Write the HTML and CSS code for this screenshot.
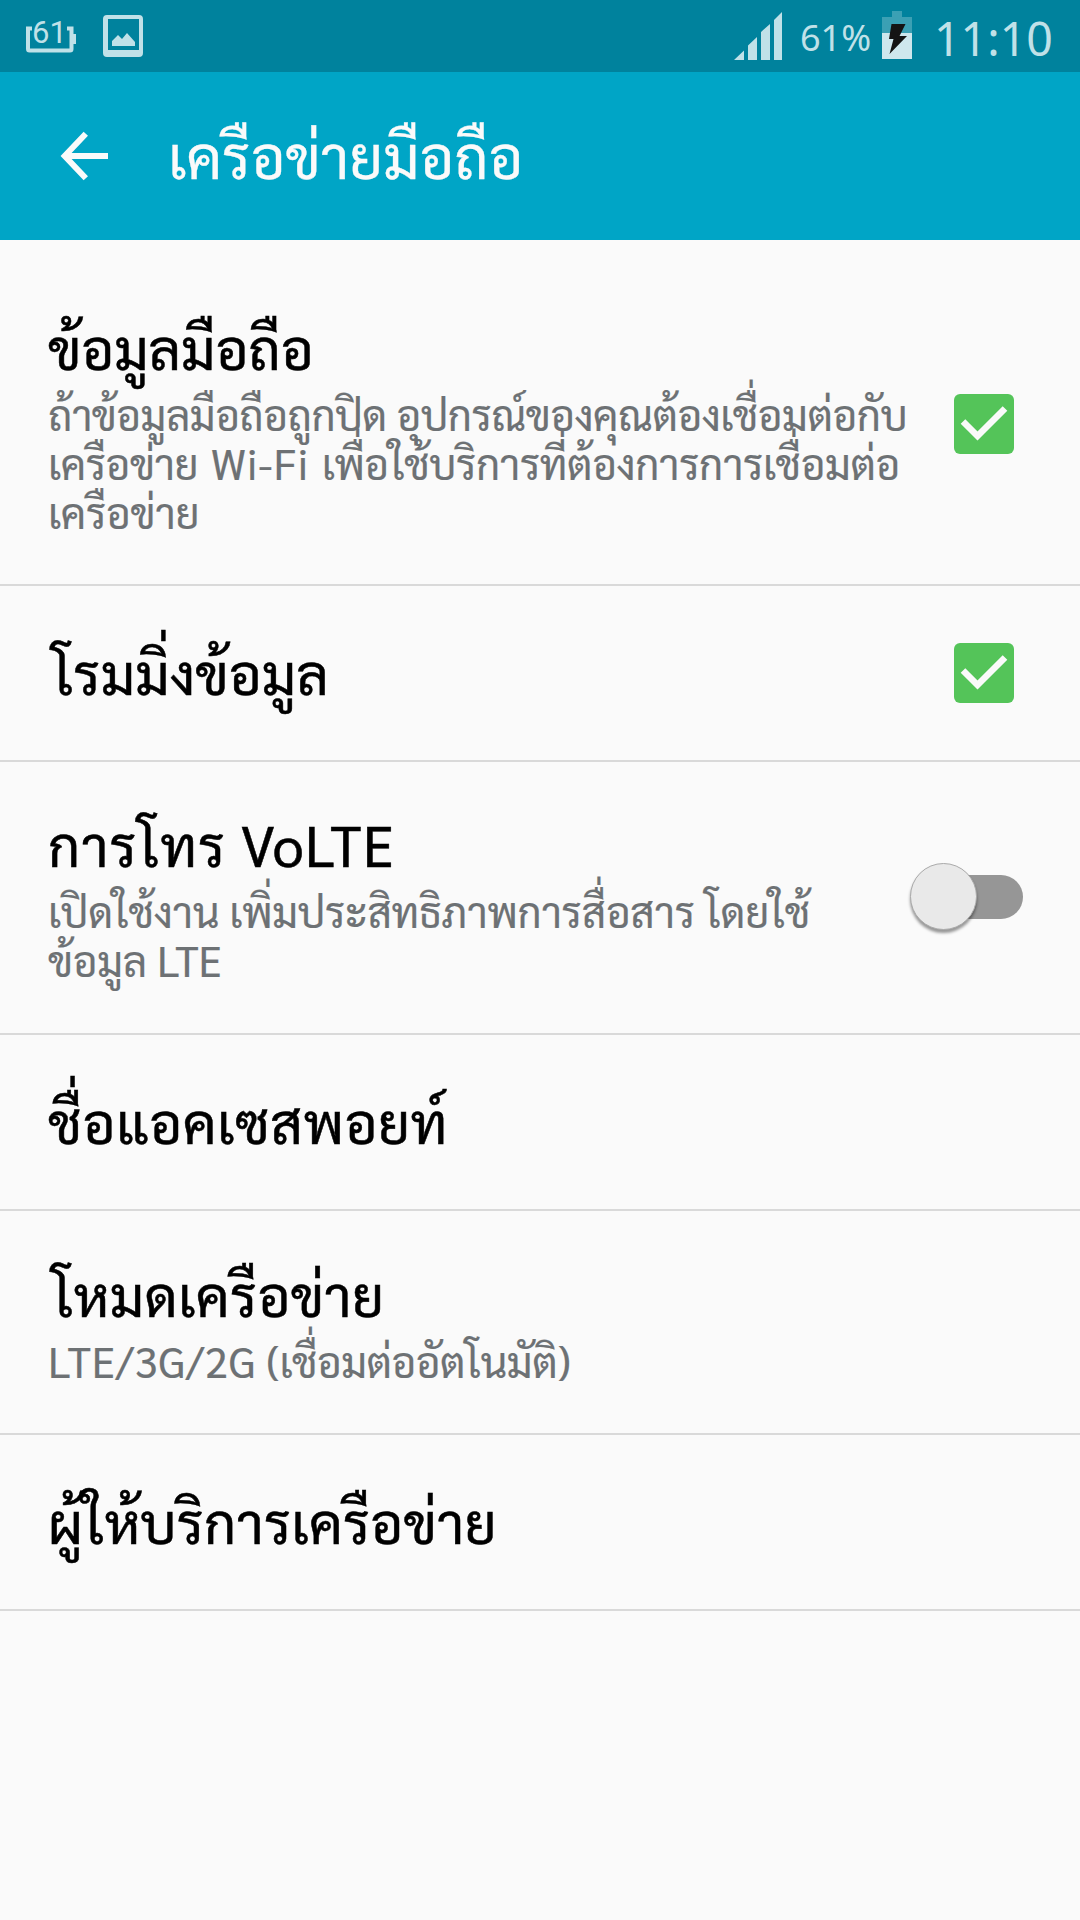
FILE: index.html
```html
<!DOCTYPE html>
<html lang="th">
<head>
<meta charset="utf-8">
<title>เครือข่ายมือถือ</title>
<link rel="stylesheet" href="styles.css">
</head>
<body>
<header class="status-bar">
  <div class="status-left">
    <svg class="battery-count" width="52" height="36" viewBox="0 0 52 36">
      <path d="M8 11.500H4V32q0 1.500 1.500 1.500H46q1.500 0 1.500-1.500V11.500H43" fill="none" stroke="#c0e1e8" stroke-width="4"/>
      <rect x="48" y="17" width="4" height="10" fill="#c0e1e8"/>
      <text class="battery-count-text" x="8" y="26">61</text>
    </svg>
    <svg class="picture" width="40" height="43" viewBox="0 0 40 43">
      <path fill="#c0e1e8" fill-rule="evenodd" d="M4 0h32q4 0 4 4v34q0 4-4 4H4q-4 0-4-4V4q0-4 4-4zM5 4v31h31V4z"/>
      <path fill="#c0e1e8" d="M9 31v-5l6-6 4 4 5-6 8 9v4z"/>
    </svg>
  </div>
  <div class="status-right">
    <svg class="signal" width="48" height="48" viewBox="0 0 48 48">
      <path fill="#c0e1e8" d="M0 48 10 38.500V48zM14 48V33.500l9-8.500V48zM27 48V20l9-8v36zM40 48V8l8-8v48z"/>
    </svg>
    <span class="percent">61%</span>
    <svg class="battery" width="30" height="48" viewBox="0 0 30 48">
      <path fill="#3ba0b4" d="M10 0h10v6h10v17H0V6h10z"/>
      <path fill="#cee7ed" d="M0 22h30v26H0z"/>
      <path fill="#141414" d="M9.500 13h14l-6 12H25L7.500 43l4-15H7z"/>
    </svg>
    <span class="clock">11:10</span>
  </div>
</header>
<nav class="app-bar">
  <svg class="back" width="48" height="52" viewBox="0 0 48 52"><path d="M48 26H6M25.800 3.700 4.700 26l21.100 22.300" fill="none" stroke="#fafafa" stroke-width="6"/></svg>
  <h1 class="app-title">เครือข่ายมือถือ</h1>
</nav>
<main class="list">
  <section class="row row-data">
    <div class="text">
      <h2 class="title">ข้อมูลมือถือ</h2>
      <p class="summary"><span class="tight">ถ้าข้อมูลมือถือถูกปิด อุปกรณ์ของคุณต้องเชื่อมต่อกับ</span><br><span class="spaced">เครือข่าย <span class="latin">Wi-Fi</span> เพื่อใช้บริการที่ต้องการการเชื่อมต่อ</span><br>เครือข่าย</p>
    </div>
    <svg class="check" width="60" height="60" viewBox="0 0 60 60"><rect width="60" height="60" rx="6" fill="#54c459"/><path d="M9 27.500 23.500 42 51 14.500" fill="none" stroke="#fafafa" stroke-width="6.500"/></svg>
  </section>
  <section class="row">
    <div class="text"><h2 class="title title-roaming">โรมมิ่งข้อมูล</h2></div>
    <svg class="check" width="60" height="60" viewBox="0 0 60 60"><rect width="60" height="60" rx="6" fill="#54c459"/><path d="M9 27.500 23.500 42 51 14.500" fill="none" stroke="#fafafa" stroke-width="6.500"/></svg>
  </section>
  <section class="row row-switch">
    <div class="text">
      <h2 class="title title-volte">การโทร VoLTE</h2>
      <p class="summary">เปิดใช้งาน เพิ่มประสิทธิภาพการสื่อสาร โดยใช้<br>ข้อมูล LTE</p>
    </div>
    <div class="switch"><div class="thumb"></div></div>
  </section>
  <section class="row">
    <div class="text"><h2 class="title title-apn">ชื่อแอคเซสพอยท์</h2></div>
  </section>
  <section class="row row-mode">
    <div class="text">
      <h2 class="title title-mode">โหมดเครือข่าย</h2>
      <p class="summary"><span class="latin">LTE/3G/2G</span> <span class="tight">(เชื่อมต่ออัตโนมัติ)</span></p>
    </div>
  </section>
  <section class="row">
    <div class="text"><h2 class="title title-operator">ผู้ให้บริการเครือข่าย</h2></div>
  </section>
</main>
</body>
</html>
```
FILE: styles.css
```css
* { box-sizing: border-box; margin: 0; padding: 0; }
body { width: 1080px; height: 1920px; overflow: hidden; background: #fafafa; font-family: Sarabun, "Noto Sans", sans-serif; }
svg { display: block; flex: none; overflow: visible; }

.status-bar { display: flex; justify-content: space-between; height: 72px; background: #00829d; color: #c0e1e8; font-family: "Noto Sans", sans-serif; }
.status-left { display: flex; align-items: flex-start; gap: 27px; padding: 15px 0 0 24px; }
.battery-count { margin-top: 2px; }
.battery-count-text { font-size: 31px; fill: #c0e1e8; font-family: Roboto, sans-serif; }
.status-right { display: flex; align-items: flex-start; padding-right: 27px; }
.signal { margin: 12px 18px 0 0; }
.percent { width: 82px; font-size: 36px; line-height: 75px; }
.battery { margin: 11px 22px 0 0; }
.clock { width: 119px; font-size: 46.5px; line-height: 76px; white-space: nowrap; }

.app-bar { display: flex; height: 168px; align-items: center; background: #00a5c6; padding-left: 60px; }
.app-title { margin-left: 60px; padding-bottom: 2px; font-size: 59px; font-weight: 400; color: #fafafa; line-height: 90px; letter-spacing: .1px; white-space: nowrap; -webkit-text-stroke: .3px #fafafa; }

.list { padding-top: 22px; }
.row { display: flex; height: 176px; align-items: center; justify-content: space-between; padding: 0 66px 0 48px; border-bottom: 2px solid #d9d9d9; }
.row-data { height: 324px; padding-top: 2px; }
.row-switch { height: 273px; padding: 0 57px 1px 48px; }
.row-mode { height: 224px; }
.text { padding-bottom: 2px; }
.title { font-size: 56px; font-weight: 400; line-height: 80px; color: #000; white-space: nowrap; -webkit-text-stroke: .5px #000; }
.title-roaming { margin-left: 4px; letter-spacing: .15px; }
.title-volte { letter-spacing: 1.1px; }
.title-apn { letter-spacing: .65px; }
.title-mode { margin-left: 4px; letter-spacing: .4px; }
.title-operator { letter-spacing: .25px; }
.summary { margin-top: 2px; padding-bottom: 4px; font-size: 42px; line-height: 49px; color: #6d7174; letter-spacing: -.2px; white-space: nowrap; -webkit-text-stroke: .2px #6d7174; }
.tight { letter-spacing: -.45px; }
.spaced { letter-spacing: -.35px; word-spacing: 3px; }
.latin { letter-spacing: 1px; }

.switch { position: relative; flex: none; width: 113px; height: 44px; background: linear-gradient(#969696, #969696) right / 80px 44px no-repeat; border-radius: 22px; }
.thumb { position: absolute; left: 0; top: -12px; width: 67px; height: 67px; border-radius: 50%; background: #e9e9e9; border: 1px solid #aaa; box-shadow: 0 3px 3px rgba(0,0,0,.4); }
```
